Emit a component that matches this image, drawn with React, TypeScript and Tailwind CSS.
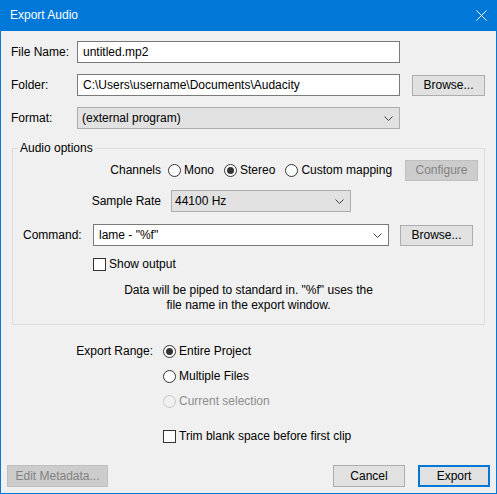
import React from 'react';

/* ---------- Small widgets ---------- */
const Chevron: React.FC = () => (
  <svg width="9" height="5" viewBox="0 0 9 5" className="shrink-0">
    <path d="M0.5 0.5 L4.5 4.5 L8.5 0.5" fill="none" stroke="#404040" strokeWidth="1" />
  </svg>
);

const Radio: React.FC<{ checked?: boolean; disabled?: boolean; label: string }> = ({ checked, disabled, label }) => (
  <div className="flex items-center">
    <span
      className={`w-[13px] h-[13px] rounded-full border flex items-center justify-center shrink-0 ${
        disabled ? 'border-[#c6c6c6] bg-[#f0f0f0]' : 'border-[#333333] bg-white'
      }`}
    >
      {checked && <span className="w-[7px] h-[7px] rounded-full bg-[#333333]" />}
    </span>
    <span className={`ml-[3px] ${disabled ? 'text-[#8d8d8d]' : ''}`}>{label}</span>
  </div>
);

const Checkbox: React.FC<{ label: string }> = ({ label }) => (
  <div className="flex items-center">
    <span className="w-[13px] h-[13px] border border-[#333333] bg-white shrink-0" />
    <span className="ml-[3px]">{label}</span>
  </div>
);

const Button: React.FC<{ label: string; className?: string; disabled?: boolean; primary?: boolean }> = ({
  label,
  className = '',
  disabled,
  primary,
}) => (
  <div
    className={`flex items-center justify-center shrink-0 ${
      disabled
        ? 'bg-[#cccccc] border border-[#bfbfbf] text-[#838383]'
        : primary
        ? 'bg-[#e1e1e1] border-2 border-[#0078d7]'
        : 'bg-[#e1e1e1] border border-[#adadad]'
    } ${className}`}
  >
    {label}
  </div>
);

/* ---------- Dialog ---------- */
export default function App() {
  return (
    <div
      className="w-[497px] h-[494px] bg-[#0078d7] px-px pb-px flex flex-col text-[12px] leading-[15px] text-black"
      style={{ fontFamily: '"Liberation Sans", Arial, sans-serif' }}
    >
      {/* Title bar */}
      <div className="h-[31px] flex items-center pl-[9px] pr-[9px] text-white shrink-0">
        <span>Export Audio</span>
        <svg width="11" height="11" viewBox="0 0 11 11" className="ml-auto">
          <path d="M0.5 0.5 L10.5 10.5 M10.5 0.5 L0.5 10.5" stroke="white" strokeWidth="1" />
        </svg>
      </div>

      {/* Body */}
      <div className="flex-1 bg-[#f0f0f0] flex flex-col pt-[10px] pb-[6px]">
        {/* File name */}
        <div className="flex items-center h-[22px]">
          <span className="pl-[10px] w-[76px]">File Name:</span>
          <div className="w-[323px] h-[22px] bg-white border border-[#7a7a7a] flex items-center pl-[5px]">untitled.mp2</div>
        </div>

        {/* Folder */}
        <div className="flex items-center h-[22px] mt-[11px]">
          <span className="pl-[10px] w-[76px]">Folder:</span>
          <div className="w-[323px] h-[22px] bg-white border border-[#7a7a7a] flex items-center pl-[5px]">
            C:\Users\username\Documents\Audacity
          </div>
          <Button label="Browse..." className="ml-[12px] w-[73px] h-[21px]" />
        </div>

        {/* Format */}
        <div className="flex items-center h-[22px] mt-[11px]">
          <span className="pl-[10px] w-[76px]">Format:</span>
          <div className="w-[323px] h-[22px] bg-[#e1e1e1] border border-[#adadad] flex items-center pl-[4px] pr-[6px]">
            <span>(external program)</span>
            <span className="ml-auto flex">
              <Chevron />
            </span>
          </div>
        </div>

        {/* Audio options group */}
        <fieldset className="mx-[11px] mt-[11px] border border-[#dcdcdc] pb-[11px]">
          <legend className="ml-[5px] px-[2px] leading-[16px]">Audio options</legend>

          <div className="flex items-center h-[21px] mt-[4px]">
            <span className="w-[148px] text-right">Channels</span>
            <div className="ml-[7px]">
              <Radio label="Mono" />
            </div>
            <div className="ml-[10px]">
              <Radio label="Stereo" checked />
            </div>
            <div className="ml-[10px]">
              <Radio label="Custom mapping" />
            </div>
            <Button label="Configure" disabled className="ml-auto mr-[6px] w-[73px] h-[21px]" />
          </div>

          <div className="flex items-center h-[22px] mt-[9px]">
            <span className="w-[148px] text-right">Sample Rate</span>
            <div className="ml-[10px] w-[180px] h-[22px] bg-[#e1e1e1] border border-[#adadad] flex items-center pl-[3px] pr-[6px]">
              <span>44100 Hz</span>
              <span className="ml-auto flex">
                <Chevron />
              </span>
            </div>
          </div>

          <div className="flex items-center h-[22px] mt-[12px] pl-[10px]">
            <span className="w-[70px]">Command:</span>
            <div className="w-[296px] h-[22px] bg-white border border-[#7a7a7a] flex items-center pl-[5px] pr-[6px]">
              <span>lame - "%f"</span>
              <span className="ml-auto flex">
                <Chevron />
              </span>
            </div>
            <Button label="Browse..." className="ml-[11px] w-[73px] h-[21px]" />
          </div>

          <div className="flex items-center h-[15px] mt-[11px] ml-[80px]">
            <Checkbox label="Show output" />
          </div>

          <p className="mt-[11px] text-center">
            Data will be piped to standard in. "%f" uses the
            <br />
            file name in the export window.
          </p>
        </fieldset>

        {/* Export range */}
        <div className="flex mt-[18px]">
          <span className="w-[152px] text-right h-[16px] flex items-center justify-end">Export Range:</span>
          <div className="ml-[10px] flex flex-col">
            <div className="h-[16px] flex items-center">
              <Radio label="Entire Project" checked />
            </div>
            <div className="h-[16px] flex items-center mt-[9px]">
              <Radio label="Multiple Files" />
            </div>
            <div className="h-[16px] flex items-center mt-[9px]">
              <Radio label="Current selection" disabled />
            </div>
            <div className="h-[16px] flex items-center mt-[19px]">
              <Checkbox label="Trim blank space before first clip" />
            </div>
          </div>
        </div>

        {/* Bottom buttons */}
        <div className="flex items-center mt-auto px-[6px]">
          <Button label="Edit Metadata..." disabled className="w-[101px] h-[22px]" />
          <Button label="Cancel" className="ml-auto w-[72px] h-[22px]" />
          <Button label="Export" primary className="ml-[13px] w-[72px] h-[22px]" />
        </div>
      </div>
    </div>
  );
}
